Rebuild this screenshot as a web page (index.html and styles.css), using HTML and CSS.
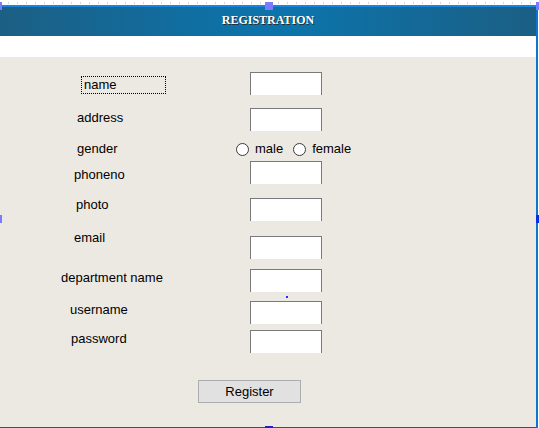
FILE: index.html
```html
<!DOCTYPE html>
<html>
<head>
<meta charset="utf-8">
<title>Registration</title>
<link rel="stylesheet" href="styles.css">
</head>
<body>
<div class="page">
  <div class="ruler"></div>
  <div class="surface">
    <div class="header">REGISTRATION</div>
    <div class="band"></div>
    <form class="form">
      <div class="row r1">
        <div class="lab"><span class="label focus">name</span></div>
        <div class="field"><input class="box" type="text"></div>
      </div>
      <div class="row r2">
        <div class="lab"><span class="label l2">address</span></div>
        <div class="field"><input class="box" type="text"></div>
      </div>
      <div class="row r3">
        <div class="lab"><span class="label l3">gender</span></div>
        <div class="field radios">
          <label class="opt"><input class="radio" type="radio" name="g"><span>male</span></label>
          <label class="opt"><input class="radio" type="radio" name="g"><span>female</span></label>
        </div>
      </div>
      <div class="row r4">
        <div class="lab"><span class="label l4">phoneno</span></div>
        <div class="field"><input class="box" type="text"></div>
      </div>
      <div class="row r5">
        <div class="lab"><span class="label l5">photo</span></div>
        <div class="field"><input class="box" type="text"></div>
      </div>
      <div class="row r6">
        <div class="lab"><span class="label l6">email</span></div>
        <div class="field"><input class="box" type="text"></div>
      </div>
      <div class="row r7">
        <div class="lab"><span class="label l7">department name</span></div>
        <div class="field"><input class="box" type="text"><span class="dot"></span></div>
      </div>
      <div class="row r8">
        <div class="lab"><span class="label l8">username</span></div>
        <div class="field"><input class="box" type="text"></div>
      </div>
      <div class="row r9">
        <div class="lab"><span class="label l9">password</span></div>
        <div class="field"><input class="box" type="password"></div>
      </div>
      <div class="actions">
        <button class="btn" type="button">Register</button>
      </div>
    </form>
  </div>
  <span class="handle h-tl"></span>
  <span class="handle h-tm"></span>
  <span class="handle h-tr"></span>
  <span class="handle h-ml"></span>
  <span class="handle h-mr"></span>
  <span class="handle h-bm"></span>
</div>
</body>
</html>
```

FILE: styles.css
```css
* { box-sizing: border-box; }
html, body {
  margin: 0;
  padding: 0;
  background: #ffffff;
}
body {
  font-family: "Liberation Sans", Arial, sans-serif;
  font-size: 13px;
  color: #000;
}
.page {
  position: relative;
  width: 539px;
  height: 428px;
  overflow: hidden;
}
.ruler {
  height: 5px;
  background-image: repeating-linear-gradient(to right, transparent 0, transparent 8px, #d6d6d6 8px, #d6d6d6 9px);
  background-size: 100% 2px;
  background-position: 0 2px;
  background-repeat: no-repeat;
}
.surface {
  width: 538px;
  border-top: 2px solid #1b84e0;
  border-right: 2px solid #1273cf;
  box-shadow: inset -1px 0 0 #3aa6f0;
}
.header {
  height: 29px;
  line-height: 27px;
  text-align: center;
  font-family: "Liberation Serif", "Times New Roman", serif;
  font-weight: bold;
  font-size: 12px;
  color: #ffffff;
  text-shadow: 1px 1px 0 #2a2a2a;
  background: linear-gradient(to right, #1c5f84 0%, #0d72a8 45%, #0c74ab 55%, #1b5f84 100%);
}
.band {
  height: 21px;
  background: #ffffff;
}
.form {
  margin: 0;
  height: 371px;
  padding-top: 15px;
  background: #ece9e3;
  border-bottom: 1px solid #1a5b86;
}
.row {
  display: flex;
  align-items: flex-start;
}
.lab {
  width: 236px;
  flex: none;
}
.field {
  display: flex;
  flex-direction: column;
  align-items: flex-start;
}
.label {
  display: inline-block;
  line-height: 15px;
  white-space: nowrap;
}
.box {
  display: block;
  margin: 0 0 0 14px;
  width: 72px;
  height: 23px;
  padding: 0;
  background: #ffffff;
  border: 1px solid #7a7a7a;
  border-bottom: none;
  border-radius: 0;
  outline: none;
}
.focus {
  margin-left: 81px;
  margin-top: 4px;
  width: 85px;
  height: 18px;
  line-height: 16px;
  padding-left: 2px;
  border: 1px dotted #000;
}
.r1 { height: 36px; }
.r2 { height: 32px; }
.r3 { height: 21px; }
.r4 { height: 36px; }
.r5 { height: 33px; }
.r6 { height: 39px; }
.r7 { height: 32px; }
.r8 { height: 29px; }
.r9 { height: 50px; }

.l2 { margin-left: 77px; margin-top: 2px; }
.l3 { margin-left: 77px; margin-top: 1px; }
.l4 { margin-left: 74px; margin-top: 6px; }
.l5 { margin-left: 76px; margin-top: 0; }
.l6 { margin-left: 74px; margin-top: 0; }
.l7 { margin-left: 61px; margin-top: 1px; }
.l8 { margin-left: 70px; margin-top: 1px; }
.l9 { margin-left: 71px; margin-top: 1px; }

.r5 .box { margin-top: 1px; }
.r6 .box { margin-top: 6px; }

.radios {
  flex-direction: row;
  align-items: center;
  margin-top: 1px;
  height: 15px;
  gap: 10px;
}
.opt {
  display: flex;
  align-items: center;
  gap: 6px;
  line-height: 15px;
}
.radio {
  -webkit-appearance: none;
  appearance: none;
  margin: 1px 0 0 0;
  width: 13px;
  height: 13px;
  border: 1px solid #3a3a3a;
  border-radius: 50%;
  background: #ffffff;
}
.dot {
  display: block;
  width: 2px;
  height: 2px;
  margin: 4px 0 0 50px;
  background: #2a2aff;
}
.actions {
  padding-left: 198px;
}
.btn {
  display: block;
  width: 103px;
  height: 23px;
  margin: 0;
  padding: 0;
  font-family: "Liberation Sans", Arial, sans-serif;
  font-size: 13px;
  color: #000;
  background: #e1e1e1;
  border: 1px solid #adadad;
  border-radius: 0;
}
.handle {
  position: absolute;
  background: #7b7bff;
}
.h-tl { left: 0; top: 2px; width: 2px; height: 8px; }
.h-tm { left: 265px; top: 2px; width: 8px; height: 8px; }
.h-tr { left: 536px; top: 2px; width: 3px; height: 8px; }
.h-ml { left: 0; top: 215px; width: 2px; height: 8px; }
.h-mr { left: 536px; top: 215px; width: 3px; height: 8px; background: #0a2ee6; }
.h-bm { left: 265px; top: 426px; width: 8px; height: 2px; background: #2020d0; }
```
